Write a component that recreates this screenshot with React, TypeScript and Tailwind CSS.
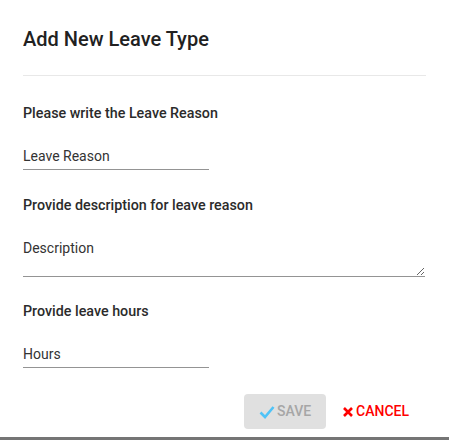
import React from "react";

export default function App() {
  const font = { fontFamily: "Roboto, 'Liberation Sans', sans-serif" };
  return (
    <div className="w-[449px] h-[440px] bg-white overflow-hidden" style={font}>
      <div className="w-[447px] h-[437px] bg-white rounded-br-[4px] pl-[23px] pr-[21px] pt-[27px] flex flex-col">
        <h2 className="text-[20px] leading-[25px] font-medium text-[#212121]">Add New Leave Type</h2>
        <div className="mt-[23px] h-px bg-[#e8e8e8]" />

        <div className="mt-[27px] text-[14.3px] leading-[20px] font-medium text-[#2b2b2b]">Please write the Leave Reason</div>
        <input
          readOnly
          value="Leave Reason"
          className="mt-[23px] w-[186px] h-[24px] pb-[3px] text-[14px] leading-[20px] text-[#333] border-b border-[#949494] outline-none bg-transparent"
        />

        <div className="mt-[25px] text-[14.3px] leading-[20px] font-medium text-[#2b2b2b]">Provide description for leave reason</div>
        <textarea
          readOnly
          value="Description"
          className="mt-[23px] w-[402px] h-[39px] p-0 text-[14px] leading-[20px] text-[#333] border-b border-[#949494] outline-none bg-transparent"
        />

        <div className="mt-[24px] text-[14.3px] leading-[20px] font-medium text-[#2b2b2b]">Provide leave hours</div>
        <input
          readOnly
          value="Hours"
          className="mt-[23px] w-[186px] h-[24px] pb-[3px] text-[14px] leading-[20px] text-[#333] border-b border-[#949494] outline-none bg-transparent"
        />

        <div className="mt-[26px] flex justify-end pr-[9px] gap-[8px]">
          <button className="w-[82px] h-[35px] rounded-[4px] bg-[#e0e0e0] flex items-center justify-center gap-[2px] text-[14px] font-medium text-[#a6a6a6]">
            <svg width="16" height="14" viewBox="0 0 16 14">
              <path d="M1.5 7.5 L6 12 L14.5 2" fill="none" stroke="#4fc3f7" strokeWidth="2.6" />
            </svg>
            <span>SAVE</span>
          </button>
          <button className="h-[35px] px-[8px] flex items-center gap-[2px] text-[14px] font-medium text-[#ff0000]">
            <svg width="12" height="12" viewBox="0 0 12 12">
              <path d="M2 2 L10 10 M10 2 L2 10" fill="none" stroke="#ff0000" strokeWidth="2.6" />
            </svg>
            <span>CANCEL</span>
          </button>
        </div>
      </div>
      <div className="h-[3px] bg-[#757575]" />
    </div>
  );
}
